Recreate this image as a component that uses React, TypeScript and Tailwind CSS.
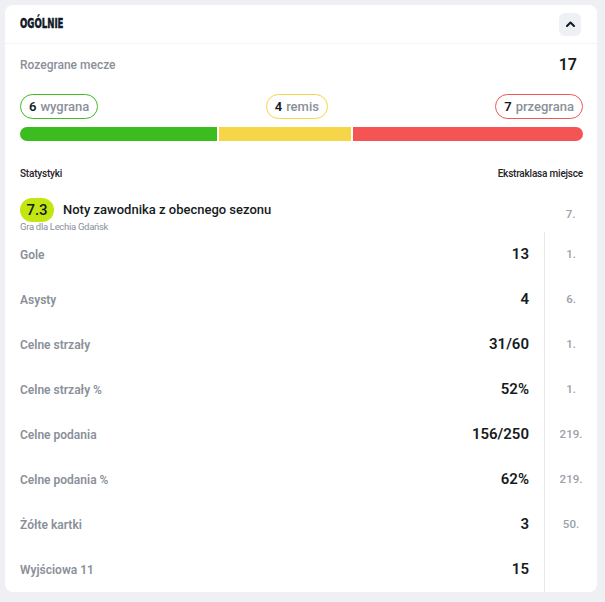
import React from "react";

const rows: { label: string; value: string; rank: string }[] = [
  { label: "Gole", value: "13", rank: "1." },
  { label: "Asysty", value: "4", rank: "6." },
  { label: "Celne strzały", value: "31/60", rank: "1." },
  { label: "Celne strzały %", value: "52%", rank: "1." },
  { label: "Celne podania", value: "156/250", rank: "219." },
  { label: "Celne podania %", value: "62%", rank: "219." },
  { label: "Żółte kartki", value: "3", rank: "50." },
  { label: "Wyjściowa 11", value: "15", rank: "" },
];

export default function App() {
  return (
    <div
      className="min-h-[602px] w-[605px] bg-[#eff0f4] pt-[5px] pl-[5px]"
      style={{ fontFamily: "Roboto, 'Noto Sans', sans-serif" }}
    >
      <div className="w-[592px] h-[587px] bg-white rounded-[8px] overflow-hidden flex flex-col">
        {/* header */}
        <div className="h-[39px] shrink-0 flex items-center justify-between pl-[15px] pr-[16px] border-b border-[#f3f4f6]">
          <span
            className="inline-block origin-left scale-x-[0.66] text-[14.5px] font-bold text-[#111827] [-webkit-text-stroke:0.5px_#111827]"
            style={{ fontFamily: "'DejaVu Sans Condensed', 'DejaVu Sans', sans-serif" }}
          >
            OGÓLNIE
          </span>
          <button className="w-[22px] h-[23px] rounded-[6px] bg-[#eff0f4] flex items-center justify-center">
            <svg width="9" height="6" viewBox="0 0 9 6" fill="none">
              <path d="M1 5L4.5 1.5L8 5" stroke="#111827" strokeWidth="2" strokeLinecap="round" strokeLinejoin="round" />
            </svg>
          </button>
        </div>

        {/* summary */}
        <div className="pl-[15px] pr-[14px]">
          <div className="h-[42px] flex items-center justify-between pr-[6px]">
            <span className="text-[12px] font-medium text-[#8a9099]">Rozegrane mecze</span>
            <span className="text-[16px] font-semibold text-[#161a21]">17</span>
          </div>
          <div className="mt-[8px] flex items-center justify-between">
            <div className="h-[25px] px-[8px] rounded-full border border-[#3dbd20] flex items-center gap-[4px] text-[13px] font-medium">
              <span className="text-[#161a21] font-semibold">6</span>
              <span className="text-[#8a9099]">wygrana</span>
            </div>
            <div className="h-[25px] px-[8px] rounded-full border border-[#f4d548] flex items-center gap-[4px] text-[13px] font-medium">
              <span className="text-[#161a21] font-semibold">4</span>
              <span className="text-[#8a9099]">remis</span>
            </div>
            <div className="h-[25px] px-[8px] rounded-full border border-[#f25555] flex items-center gap-[4px] text-[13px] font-medium">
              <span className="text-[#161a21] font-semibold">7</span>
              <span className="text-[#8a9099]">przegrana</span>
            </div>
          </div>
          <div className="mt-[8px] h-[14px] flex gap-[2px] rounded-full overflow-hidden">
            <div className="h-full bg-[#3bbd1f]" style={{ flexGrow: 6, flexBasis: 0 }} />
            <div className="h-full bg-[#f4d648]" style={{ flexGrow: 4, flexBasis: 0 }} />
            <div className="h-full bg-[#f45454]" style={{ flexGrow: 7, flexBasis: 0 }} />
          </div>
        </div>

        {/* stats */}
        <div className="mt-[25px] pl-[15px] pr-[14px] h-[14px] flex items-center justify-between text-[10px] font-medium text-[#1f2328] tracking-[-0.2px]">
          <span>Statystyki</span>
          <span>Ekstraklasa miejsce</span>
        </div>

        <div className="pt-[18px] pl-[15px] flex">
          <div className="flex-1 flex flex-col">
            <div className="flex items-center gap-[9px]">
              <div className="h-[24px] w-[34px] rounded-full bg-[#c3e613] flex items-center justify-center text-[15px] font-medium text-[#161a21]">
                7.3
              </div>
              <span className="text-[13px] font-medium text-[#161a21]">Noty zawodnika z obecnego sezonu</span>
            </div>
            <span className="text-[9.5px] leading-[10px] text-[#8a9099] tracking-[-0.3px]">Gra dla Lechia Gdańsk</span>
          </div>
          <div className="w-[53px] flex items-center justify-center text-[11.5px] font-medium text-[#9aa0a8]">7.</div>
        </div>

        <div className="flex-1 flex flex-col">
          {rows.map((r) => (
            <div key={r.label} className="h-[45px] flex">
              <div className="flex-1 pl-[15px] pr-[15px] flex items-center justify-between">
                <span className="text-[12px] font-semibold text-[#8a9099]">{r.label}</span>
                <span className="text-[15px] font-semibold text-[#161a21]">{r.value}</span>
              </div>
              <div className="w-[53px] border-l border-[#e6e9ee] flex items-center justify-center text-[11.5px] font-medium text-[#9aa0a8]">
                {r.rank}
              </div>
            </div>
          ))}
        </div>
      </div>
    </div>
  );
}
